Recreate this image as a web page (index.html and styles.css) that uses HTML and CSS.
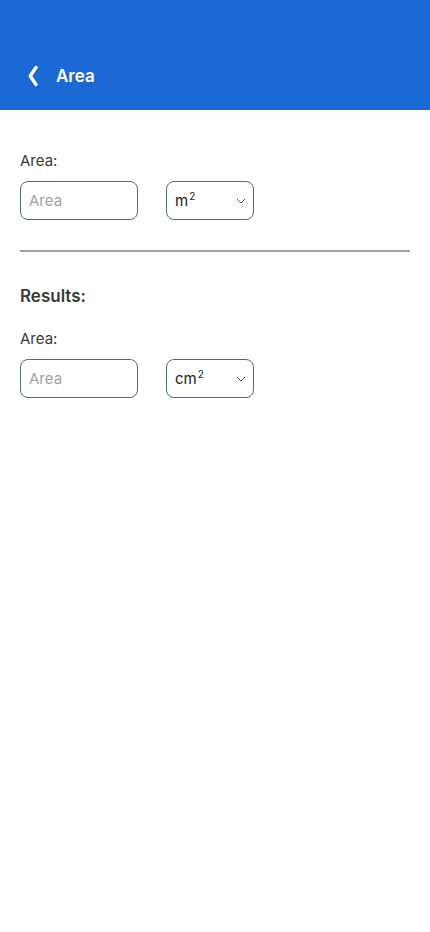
FILE: index.html
```html
<!DOCTYPE html>
<html>
<head>
<meta charset="utf-8">
<link rel="stylesheet" href="styles.css">
</head>
<body>
<header class="topbar">
  <div class="back">
    <svg width="14" height="22" viewBox="0 0 14 22"><path d="M10 2.5 L4.2 11 L10 19.5" fill="none" stroke="#fff" stroke-width="3.4" stroke-linecap="round" stroke-linejoin="round"/></svg>
  </div>
  <h1 class="title">Area</h1>
</header>
<main class="content">
  <section class="group">
    <label class="label">Area:</label>
    <div class="row">
      <div class="input">Area</div>
      <div class="select"><span class="unit">m<sup>2</sup></span><svg class="caret" width="10" height="6" viewBox="0 0 10 6"><path d="M1 1 L5 5 L9 1" fill="none" stroke="#555" stroke-width="1"/></svg></div>
    </div>
  </section>
  <hr class="divider">
  <h2 class="results">Results:</h2>
  <section class="group">
    <label class="label">Area:</label>
    <div class="row">
      <div class="input">Area</div>
      <div class="select"><span class="unit">cm<sup>2</sup></span><svg class="caret" width="10" height="6" viewBox="0 0 10 6"><path d="M1 1 L5 5 L9 1" fill="none" stroke="#555" stroke-width="1"/></svg></div>
    </div>
  </section>
</main>
</body>
</html>
```
FILE: styles.css
```css
* { box-sizing: border-box; }
body { margin: 0; font-family: Inter, "Noto Sans", sans-serif; background: #fff; }
.topbar {
  height: 110px;
  background: #1a69d4;
  display: flex;
  align-items: flex-end;
  padding: 0 0 23px 26px;
}
.back { width: 30px; height: 22px; display: flex; align-items: center; }
.title { margin: 0; color: #fff; font-size: 17px; font-weight: 600; line-height: 22px; }
.content { padding: 41px 20px 0 20px; }
.group { display: flex; flex-direction: column; }
.label { font-size: 15px; color: #3a3a3a; line-height: 20px; }
.row { display: flex; gap: 28px; margin-top: 10px; }
.input {
  width: 118px; height: 39px;
  border: 1px solid #4f6b78; border-radius: 8px;
  padding: 0 8px; display: flex; align-items: center;
  font-size: 15px; color: #a3a3a3;
}
.select {
  width: 88px; height: 39px;
  border: 1px solid #4f6b78; border-radius: 8px;
  padding: 0 7px 0 8px; display: flex; align-items: center; justify-content: space-between;
  font-size: 15px; color: #222;
}
.unit sup { font-size: 10px; line-height: 0; vertical-align: 6px; margin-left: 1px; }
.divider { border: none; height: 2px; background: #a2a2a2; margin: 30px 0 0 0; }
.results { margin: 33px 0 0 0; font-size: 17px; font-weight: 600; color: #3a3a3a; line-height: 22px; }
.content .results + .group { margin-top: 22px; }
```
